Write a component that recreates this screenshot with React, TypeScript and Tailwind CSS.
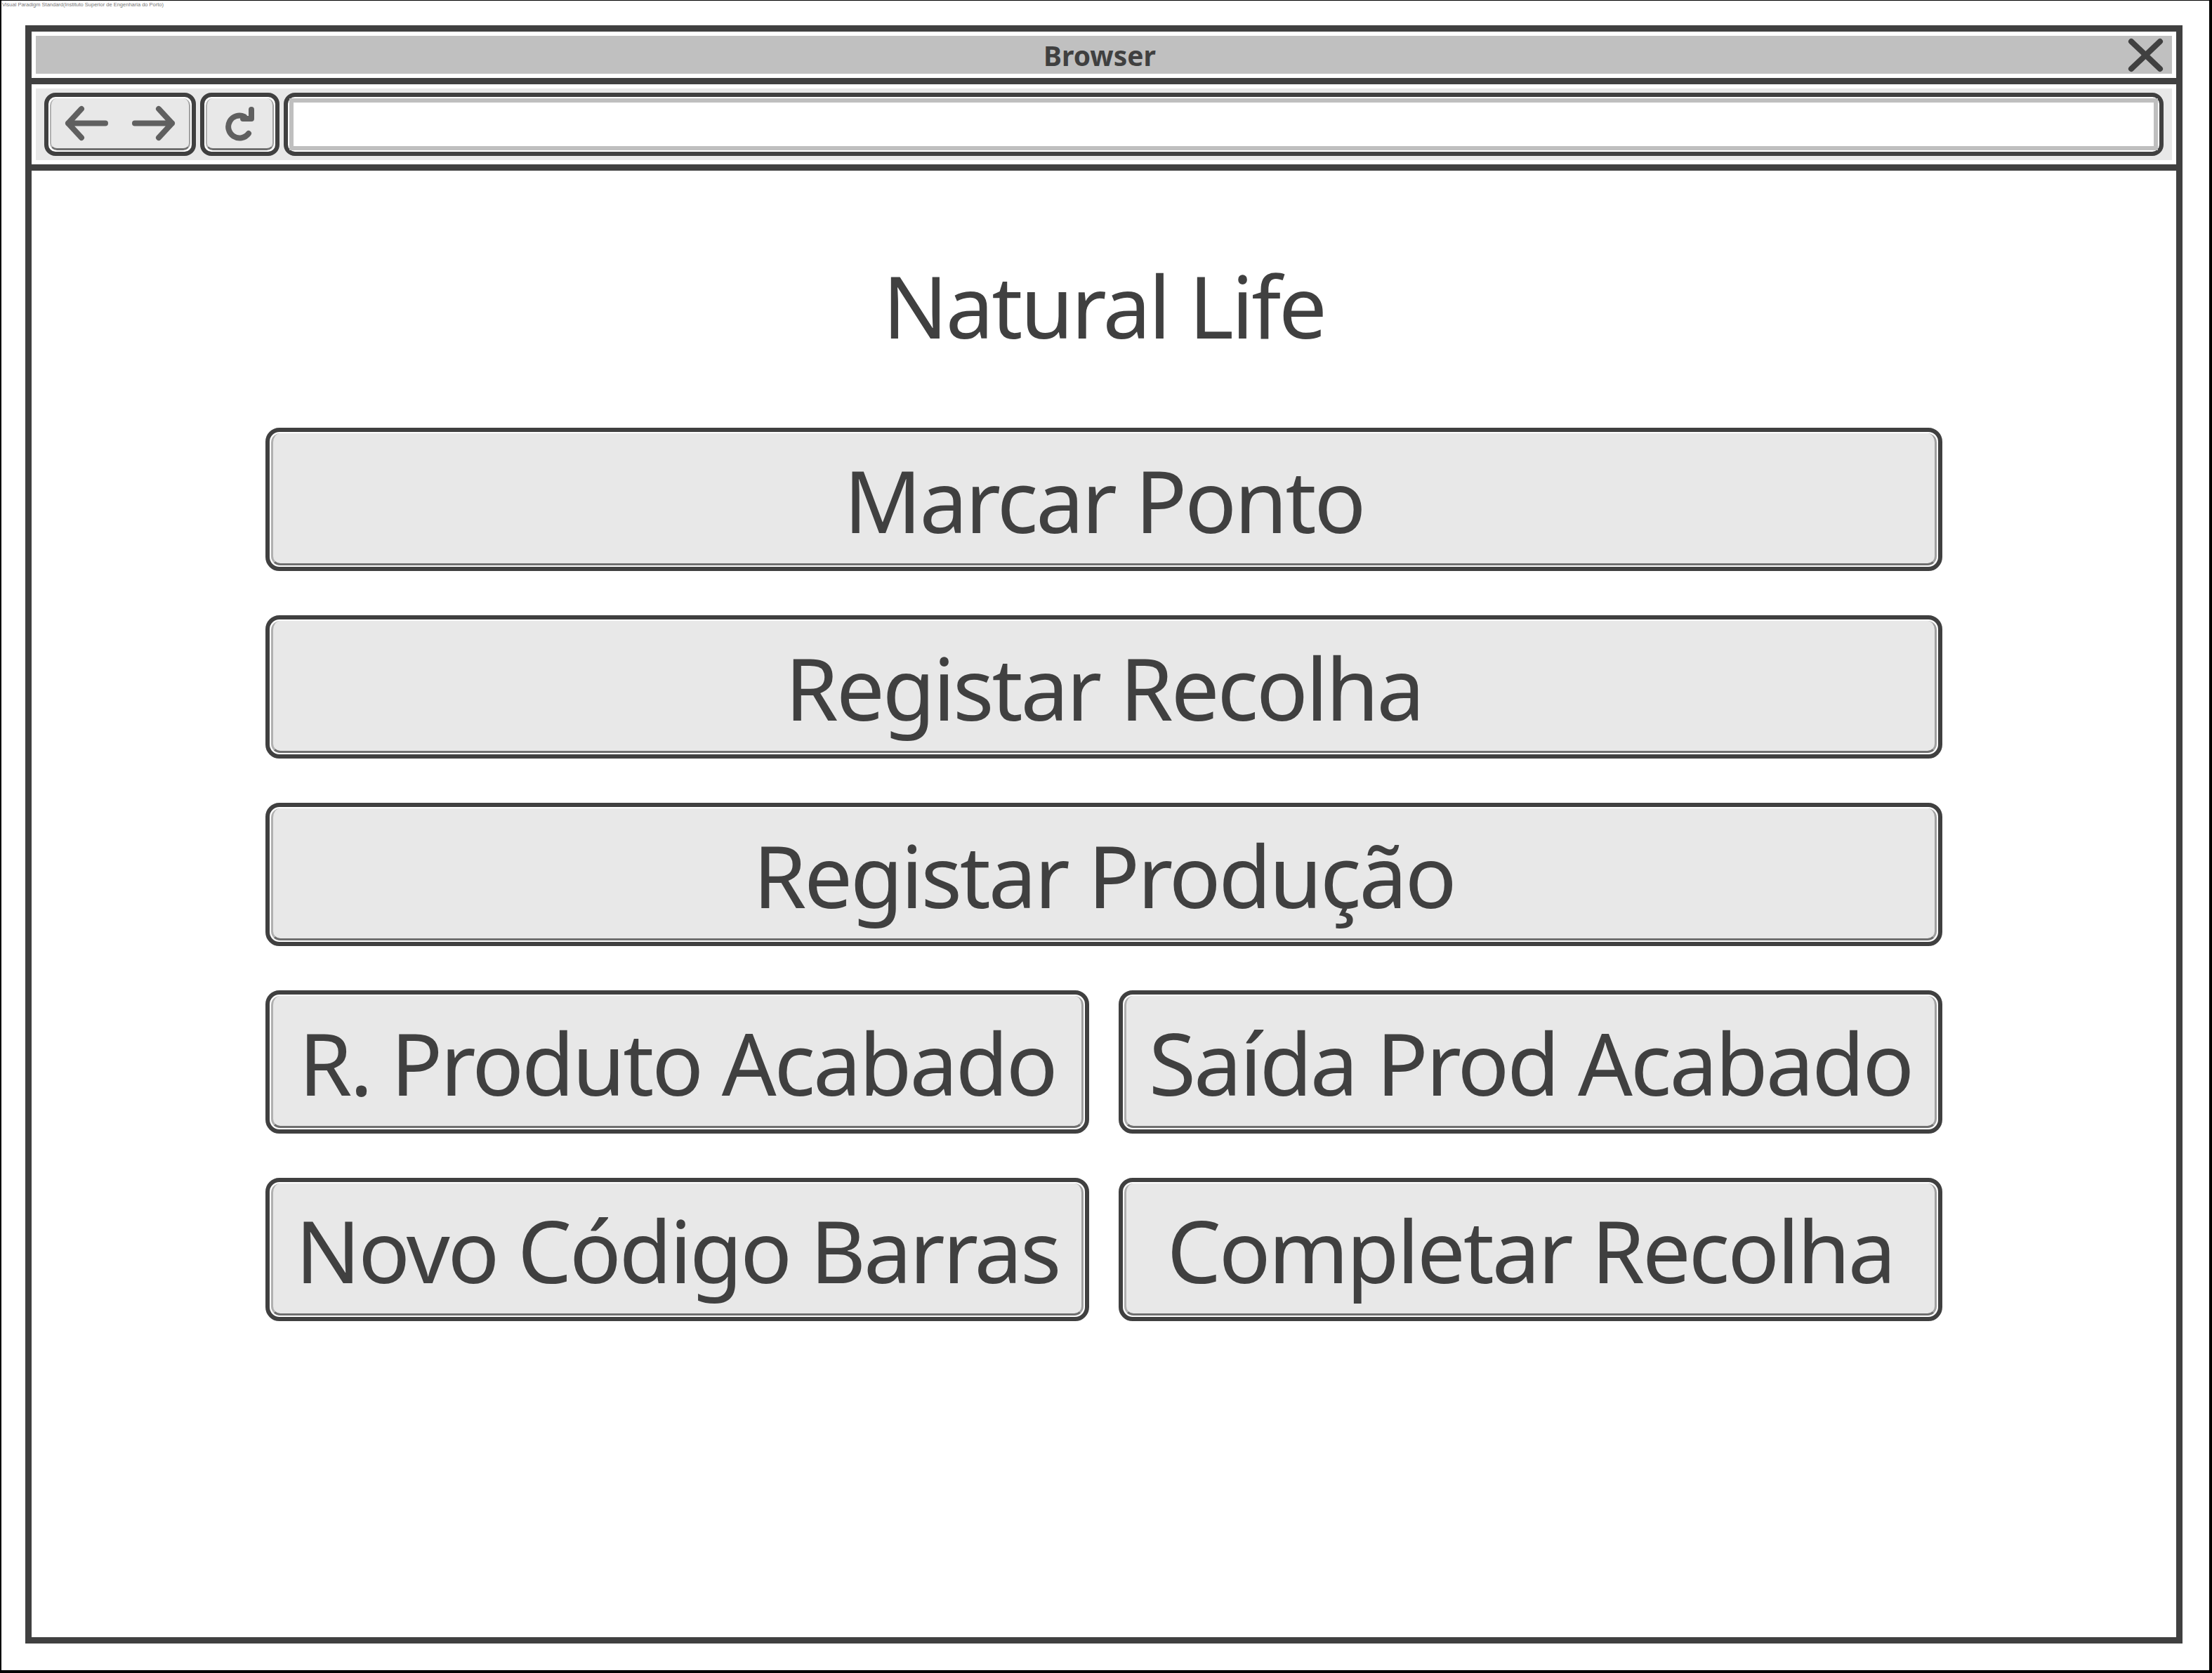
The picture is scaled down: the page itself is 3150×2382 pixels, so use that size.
const rows: string[][] = [
  ["Marcar Ponto"],
  ["Registar Recolha"],
  ["Registar Produção"],
  ["R. Produto Acabado", "Saída Prod Acabado"],
  ["Novo Código Barras", "Completar Recolha"],
];

function MockButton({ label }: { label: string }) {
  return (
    <div className="h-[204px] flex-1 rounded-[20px] border-[6px] border-[#404040] bg-white p-[2px]">
      <div className="flex h-full items-center justify-center rounded-[13px] border-x-[3px] border-b-[3px] border-l-[#b0b0b0] border-r-[#a0a0a0] border-b-[#6f6f6f] bg-[#e8e8e8] pt-[4px]">
        <span className="whitespace-nowrap text-[122px] leading-none tracking-[-0.025em] text-[#404040]">{label}</span>
      </div>
    </div>
  );
}

function NavButton({ width, children }: { width: string; children: React.ReactNode }) {
  return (
    <div className={`${width} h-[90px] shrink-0 rounded-[16px] border-[6px] border-[#404040] bg-white p-[2px]`}>
      <div className="flex h-full items-center justify-center gap-[32px] rounded-[10px] border-x-[2px] border-b-[3px] border-l-[#b0b0b0] border-r-[#a0a0a0] border-b-[#6f6f6f] bg-[#e8e8e8]">
        {children}
      </div>
    </div>
  );
}

export default function App() {
  return (
    <div className="relative h-[2382px] w-[3150px] overflow-hidden border-b-4 border-l-2 border-r-4 border-t border-black bg-white font-['Noto_Sans',sans-serif]">
      <div className="absolute left-[1px] top-[2px] whitespace-nowrap font-['Liberation_Sans',sans-serif] text-[7.5px] leading-none text-[#777]">
        Visual Paradigm Standard(Instituto Superior de Engenharia do Porto)
      </div>

      <div className="ml-[34px] mt-[35px] flex h-[2304px] w-[3072px] flex-col border-[9px] border-[#404040] bg-white">
        {/* title bar */}
        <div className="p-[6px]">
          <div className="grid h-[54px] grid-cols-[1fr_auto_1fr] items-center bg-[#c0c0c0] pr-[12px]">
            <div />
            <span className="text-[39px] font-bold leading-none text-[#404040]">Browser</span>
            <svg className="justify-self-end" width="51" height="49" viewBox="0 0 51 49" fill="none" stroke="#404040" strokeWidth="8" strokeLinecap="round">
              <path d="M5 5 L46 44 M46 5 L5 44" />
            </svg>
          </div>
        </div>
        <div className="h-[9px] bg-[#404040]" />

        {/* nav bar */}
        <div className="p-[6px]">
          <div className="flex h-[102px] items-center gap-[6px] bg-[#e8e8e8] px-[12px]">
            <NavButton width="w-[216px]">
              <svg width="63" height="53" viewBox="0 0 63 53" fill="none" stroke="#606060" strokeWidth="8" strokeLinecap="round" strokeLinejoin="round">
                <path d="M5 26.5 H58 M24 6 L5 26.5 L24 47" />
              </svg>
              <svg width="63" height="53" viewBox="0 0 63 53" fill="none" stroke="#606060" strokeWidth="8" strokeLinecap="round" strokeLinejoin="round">
                <path d="M5 26.5 H58 M39 6 L58 26.5 L39 47" />
              </svg>
            </NavButton>
            <NavButton width="w-[113px]">
              <svg width="45" height="50" viewBox="0 0 45 50" fill="none" stroke="#606060" strokeWidth="8" strokeLinecap="round" strokeLinejoin="round">
                <path d="M35 39 A16 16 0 1 1 29 15" />
                <path d="M39 5 V18 H27" />
              </svg>
            </NavButton>
            <div className="h-[90px] flex-1 rounded-[16px] border-[6px] border-[#404040] bg-white p-[2px]">
              <div className="h-full border-[6px] border-[#bfbfbf] bg-white" />
            </div>
          </div>
        </div>
        <div className="h-[9px] bg-[#404040]" />

        {/* content */}
        <div className="flex flex-1 flex-col items-center">
          <h1 className="mt-[131px] text-[122px] font-normal leading-none tracking-[-0.025em] text-[#404040]">Natural Life</h1>
          <div className="mt-[113px] flex w-[2388px] flex-col gap-[63px]">
            {rows.map((row) => (
              <div key={row.join("-")} className="flex gap-[42px]">
                {row.map((label) => (
                  <MockButton key={label} label={label} />
                ))}
              </div>
            ))}
          </div>
        </div>
      </div>
    </div>
  );
}
